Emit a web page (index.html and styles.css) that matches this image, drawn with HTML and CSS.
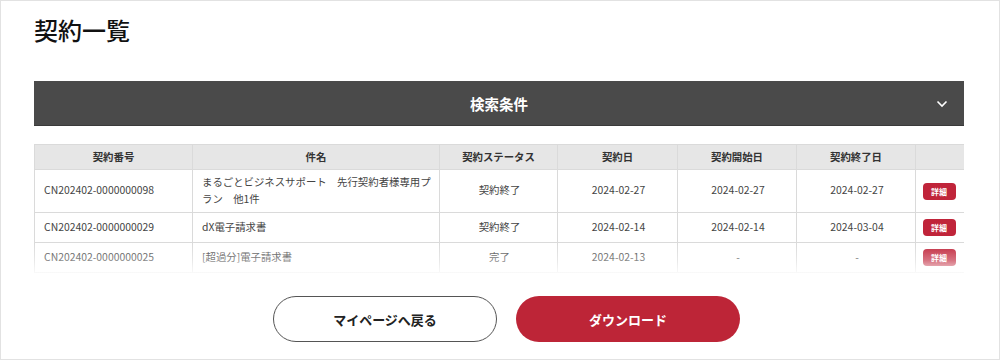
FILE: index.html
```html
<!DOCTYPE html>
<html lang="ja">
<head>
  <meta charset="UTF-8">
  <meta name="viewport" content="width=device-width, initial-scale=1.0">
  <title>契約一覧</title>
  <link rel="stylesheet" href="styles.css">
</head>
<body>
  <div class="page">
    <h1 class="page-title">契約一覧</h1>

    <div class="search-bar">
      <span></span>
      <span class="search-label">検索条件</span>
      <svg class="chevron" width="12" height="8" viewBox="0 0 12 8">
        <polyline points="1.5,1.5 6,6 10.5,1.5" fill="none" stroke="#fff" stroke-width="1.6"/>
      </svg>
    </div>

    <div class="table-wrap">
      <table class="contract-table">
        <colgroup>
          <col class="c-no">
          <col class="c-name">
          <col class="c-status">
          <col class="c-date">
          <col class="c-date2">
          <col class="c-date2">
          <col class="c-btn">
        </colgroup>
        <tr>
          <th>契約番号</th>
          <th>件名</th>
          <th>契約ステータス</th>
          <th>契約日</th>
          <th>契約開始日</th>
          <th>契約終了日</th>
          <th></th>
        </tr>
        <tr>
          <td class="left">CN202402-0000000098</td>
          <td class="left">まるごとビジネスサポート　先行契約者様専用プラン　他1件</td>
          <td>契約終了</td>
          <td>2024-02-27</td>
          <td>2024-02-27</td>
          <td>2024-02-27</td>
          <td class="action"><a class="detail-btn" href="#">詳細</a></td>
        </tr>
        <tr>
          <td class="left">CN202402-0000000029</td>
          <td class="left">dX電子請求書</td>
          <td>契約終了</td>
          <td>2024-02-14</td>
          <td>2024-02-14</td>
          <td>2024-03-04</td>
          <td class="action"><a class="detail-btn" href="#">詳細</a></td>
        </tr>
        <tr>
          <td class="left">CN202402-0000000025</td>
          <td class="left">[超過分]電子請求書</td>
          <td>完了</td>
          <td>2024-02-13</td>
          <td>-</td>
          <td>-</td>
          <td class="action"><a class="detail-btn" href="#">詳細</a></td>
        </tr>
      </table>
      <div class="fade"></div>
    </div>

    <div class="actions">
      <a class="btn btn-outline" href="#">マイページへ戻る</a>
      <a class="btn btn-red" href="#">ダウンロード</a>
    </div>
  </div>
</body>
</html>
```

FILE: styles.css
```css
body {
  margin: 0;
  font-family: "Noto Sans CJK JP", "Noto Sans", sans-serif;
  color: #222;
  background-color: #fff;
}

.page {
  width: 1000px;
  height: 360px;
  box-sizing: border-box;
  border: 1px solid #e2e2e2;
  padding: 11px 35px 0 33px;
  overflow: hidden;
}

.page-title {
  margin: 0;
  font-size: 24px;
  line-height: 36px;
  font-weight: 500;
  color: #111;
}

.search-bar {
  margin-top: 33px;
  height: 45px;
  background-color: #4a4a4a;
  display: grid;
  grid-template-columns: 1fr auto 1fr;
  align-items: center;
  border-bottom: 1px solid #3a3a3a;
  box-sizing: border-box;
}

.search-label {
  color: #fff;
  font-size: 14.5px;
  font-weight: 700;
}

.chevron {
  justify-self: end;
  margin-right: 16px;
  margin-top: 2px;
}

.table-wrap {
  position: relative;
  margin-top: 18px;
  height: 133px;
  overflow: hidden;
}

.contract-table {
  width: 930px;
  table-layout: fixed;
  border-collapse: collapse;
  font-size: 10.4px;
  line-height: 16.8px;
  color: #444;
}

.c-no { width: 158px; }
.c-name { width: 247px; }
.c-status { width: 118px; }
.c-date { width: 120px; }
.c-date2 { width: 119px; }
.c-btn { width: 49px; }

.contract-table tr {
  height: 30px;
}

.contract-table tr:first-child {
  height: 25px;
}

.contract-table th,
.contract-table td {
  border: 1px solid #dadada;
  text-align: center;
}

.contract-table th {
  background-color: #e6e6e6;
  font-weight: 700;
  color: #333;
  padding: 3px 6px;
}

.contract-table td {
  padding: 4px 7px 4px 9px;
}

.contract-table td.left {
  text-align: left;
}

.contract-table td.action {
  padding: 4px 2px 4px 0;
}

.detail-btn {
  display: inline-block;
  width: 33px;
  height: 17px;
  line-height: 17px;
  border-radius: 4px;
  background-color: #c0243a;
  color: #fff;
  font-size: 8px;
  font-weight: 700;
  text-decoration: none;
  vertical-align: middle;
}

.fade {
  position: absolute;
  left: 0;
  right: 0;
  bottom: 0;
  height: 34px;
  background: linear-gradient(to bottom, rgba(255, 255, 255, 0), rgba(255, 255, 255, 0.35) 50%, #fff 100%);
}

.actions {
  display: flex;
  justify-content: center;
  gap: 19px;
  margin-top: 19px;
  padding-left: 15px;
}

.btn {
  width: 224px;
  height: 46px;
  box-sizing: border-box;
  border-radius: 23px;
  display: flex;
  align-items: center;
  justify-content: center;
  font-size: 13px;
  font-weight: 700;
  text-decoration: none;
}

.btn-outline {
  border: 1px solid #555;
  color: #222;
  background-color: #fff;
}

.btn-red {
  background-color: #bd2537;
  color: #fff;
}
```
